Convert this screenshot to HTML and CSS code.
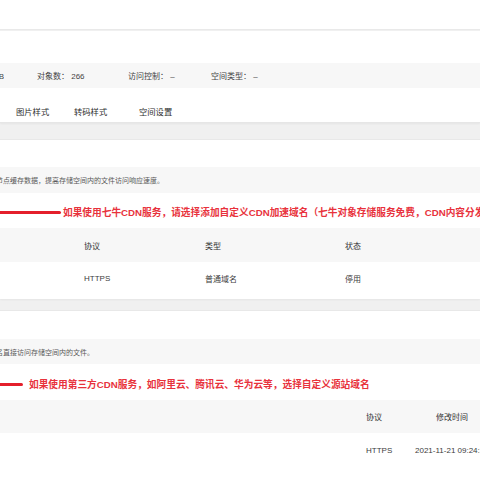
FILE: index.html
```html
<!DOCTYPE html>
<html lang="zh-CN">
<head>
<meta charset="utf-8">
<title>空间设置</title>
<link rel="stylesheet" href="styles.css">
</head>
<body>
<div class="page">
  <div class="topbar"></div>

  <section class="card card-head">
    <div class="stats">
      <div class="stat-clip"><span class="stat">存储量： 1.02 MB</span></div>
      <span class="stat">对象数：&nbsp;266</span>
      <span class="stat">访问控制：&nbsp;–</span>
      <span class="stat">空间类型：&nbsp;–</span>
    </div>
    <nav class="tabs">
      <span class="tab"></span>
      <span class="tab">图片样式</span>
      <span class="tab">转码样式</span>
      <span class="tab">空间设置</span>
    </nav>
  </section>

  <section class="card card-cdn">
    <div class="desc"><span class="desc-text">节点缓存数据，提高存储空间内的文件访问响应速度。</span></div>
    <div class="note note-cdn">
      <span class="arrow arrow-long"></span>
      <span class="note-text">如果使用七牛CDN服务，请选择添加自定义CDN加速域名（七牛对象存储服务免费，CDN内容分发网络按量计费）</span>
    </div>
    <div class="table table-cdn">
      <div class="row head">
        <span class="cell"></span>
        <span class="cell">协议</span>
        <span class="cell">类型</span>
        <span class="cell">状态</span>
      </div>
      <div class="row">
        <span class="cell"></span>
        <span class="cell">HTTPS</span>
        <span class="cell">普通域名</span>
        <span class="cell">停用</span>
      </div>
    </div>
  </section>

  <section class="card card-src">
    <div class="desc"><span class="desc-text">名直接访问存储空间内的文件。</span></div>
    <div class="note note-src">
      <span class="arrow arrow-short"></span>
      <span class="note-text">如果使用第三方CDN服务，如阿里云、腾讯云、华为云等，选择自定义源站域名</span>
    </div>
    <div class="table table-src">
      <div class="row head">
        <span class="cell"></span>
        <span class="cell">协议</span>
        <span class="cell cell-time-head">修改时间</span>
      </div>
      <div class="row">
        <span class="cell"></span>
        <span class="cell">HTTPS</span>
        <span class="cell">2021-11-21 09:24:36</span>
      </div>
    </div>
  </section>
</div>
</body>
</html>
```
FILE: styles.css
```css
html, body {
  margin: 0;
  padding: 0;
}

body {
  width: 480px;
  height: 480px;
  overflow: hidden;
  background: #f0f0f0;
  font-family: "Liberation Sans", "Noto Sans CJK SC", sans-serif;
  color: #333;
}

.page {
  display: flex;
  flex-direction: column;
}

.topbar {
  height: 29px;
  background: #fff;
  border-bottom: 1px solid #e9e9e9;
}

.card {
  background: #fff;
  box-shadow: 0 1px 2px rgba(0, 0, 0, 0.05);
  box-sizing: border-box;
}

.card-head {
  margin-top: 1px;
  height: 92px;
  padding-top: 32px;
  border-bottom: 1px solid #e6e6e6;
}

.stats {
  height: 25px;
  background: #f7f7f7;
  display: grid;
  grid-template-columns: 37px 91px 83px 1fr;
  align-items: center;
  font-size: 8px;
  color: #444;
}

.stat {
  white-space: nowrap;
}

.stat-clip {
  width: 4px;
  overflow: hidden;
  display: flex;
  justify-content: flex-end;
}

.tabs {
  height: 34px;
  display: grid;
  grid-template-columns: 16px 58px 65px 1fr;
  align-items: center;
  padding-top: 11px;
  box-sizing: border-box;
  font-size: 8.3px;
  color: #2e2e2e;
}

.tab {
  white-space: nowrap;
}

.card-cdn {
  margin-top: 16px;
  height: 160px;
  padding-top: 27px;
  border-top: 1px solid #e8e8e8;
}

.card-src {
  margin-top: 11px;
  height: 170px;
  padding-top: 28px;
  border-top: 1px solid #e8e8e8;
}

.desc {
  height: 26px;
  background: #f7f7f7;
  display: flex;
  align-items: center;
  overflow: hidden;
  font-size: 7px;
  color: #5a5a5a;
}

.card-src .desc {
  height: 25px;
}

.desc-text {
  margin-left: -4px;
  white-space: nowrap;
}

.note {
  height: 35px;
  box-sizing: border-box;
  display: flex;
  align-items: center;
  white-space: nowrap;
  overflow: hidden;
  color: #e8323c;
  font-size: 9.7px;
  font-weight: bold;
}

.note-cdn {
  padding-top: 3px;
}

.note-src {
  height: 36px;
  padding-top: 4px;
}

.arrow {
  flex: none;
  height: 3px;
  background: #e41f2b;
  border-radius: 0 2px 2px 0;
}

.arrow-long {
  width: 61px;
  margin-right: 2px;
}

.arrow-short {
  width: 23px;
  margin-right: 6px;
}

.table {
  font-size: 8px;
  color: #3c3c3c;
}

.row {
  display: grid;
  align-items: center;
  height: 33px;
  white-space: nowrap;
}

.row.head {
  background: #f7f7f7;
  height: 34px;
  color: #333;
}

.table-cdn .row {
  grid-template-columns: 84px 121px 140px 1fr;
}

.table-src .row {
  grid-template-columns: 366px 49px 1fr;
  height: 34px;
}

.table-src .row.head {
  height: 33px;
}

.cell-time-head {
  padding-left: 21px;
}
```
